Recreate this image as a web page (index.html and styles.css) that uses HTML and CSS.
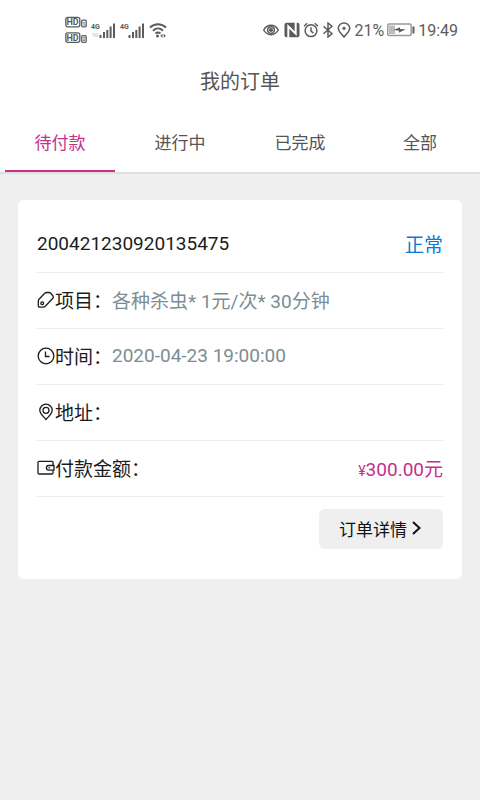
FILE: index.html
```
<!DOCTYPE html>
<html lang="zh-CN">
<head>
  <meta charset="UTF-8">
  <meta name="viewport" content="width=device-width, initial-scale=1.0">
  <title>我的订单</title>
  <link rel="stylesheet" href="styles.css">
</head>
<body>

<div class="status-bar">
  <div class="status-left">
    <svg width="22" height="28" viewBox="0 0 22 28">
      <rect x="0.8" y="1.3" width="14" height="9.5" rx="2"/>
      <text class="hd" x="1.5" y="9.2">HD</text>
      <rect x="16.7" y="4.2" width="4.5" height="6.6" rx="1"/>
      <text class="sim" x="17.5" y="9.7">1</text>
      <rect x="0.8" y="16.8" width="14" height="9.5" rx="2"/>
      <text class="hd" x="1.5" y="24.7">HD</text>
      <rect x="16.7" y="19.7" width="4.5" height="6.6" rx="1"/>
      <text class="sim" x="17.5" y="25.2">2</text>
    </svg>
    <svg width="25" height="18" viewBox="0 0 25 18">
      <text class="net" x="0" y="8">4G</text>
      <text class="net-off" x="1" y="16">1G</text>
      <path class="bars" d="M9.5 17v-3M13 17v-6M16.3 17v-8M19.6 17V5.5M23 17V2.5"/>
    </svg>
    <svg width="25" height="18" viewBox="0 0 25 18">
      <text class="net" x="0" y="8">4G</text>
      <path class="bars" d="M9.5 17v-3M13 17v-6M16.3 17v-8M19.6 17V5.5M23 17V2.5"/>
    </svg>
    <svg width="18" height="18" viewBox="0 0 18 18">
      <path class="wifi" d="M1 6.5C5.5 2 12.5 2 17 6.5M4 9.7c3-2.9 7-2.9 10 0M6.5 12.6c1.5-1.3 3.5-1.3 5 0"/>
      <circle class="fill" cx="8.5" cy="15" r="1.5"/>
      <path class="fill" d="M13.5 12.8v4L11.3 14.8zM14.7 12.8v4l2.2-2z"/>
    </svg>
  </div>
  <div class="status-right">
    <svg width="18" height="16" viewBox="0 0 18 16">
      <path d="M0.7 8C4.3 1.7 11.7 1.7 15.3 8 11.7 14.3 4.3 14.3 0.7 8z"/>
      <circle cx="8" cy="8" r="3.3"/>
      <circle class="fill" cx="8" cy="8" r="2"/>
    </svg>
    <svg width="16" height="16" viewBox="0 0 16 16">
      <rect class="fill" x="0.5" y="0.7" width="15" height="14.6" rx="2"/>
      <path class="nfc" d="M4.3 16V4.3L11.7 11.7V0"/>
    </svg>
    <svg width="16" height="16" viewBox="0 0 16 16">
      <circle cx="8" cy="8.7" r="5.9"/>
      <path d="M8 5.3v3.8l2.5 2M1 4.3 4.2 1.3M15 4.3l-3.2-3"/>
    </svg>
    <svg width="12" height="16" viewBox="0 0 12 16">
      <path d="M1.5 4.3l8.5 7.5L6 15V1l4 3.2-8.5 7.5"/>
    </svg>
    <svg width="14" height="16" viewBox="0 0 14 16">
      <path d="M7 15C4.5 11.5 1.3 9.7 1.3 6.3a5.7 5.3 0 0 1 11.4 0C12.7 9.7 9.5 11.5 7 15z"/>
      <circle class="fill" cx="7" cy="6.3" r="1.6"/>
    </svg>
    <span>21%</span>
    <svg class="battery" width="28" height="14" viewBox="0 0 28 14">
      <rect class="case" x="0.7" y="1" width="23.5" height="11.5" rx="1.5"/>
      <rect class="charge" x="2" y="2.5" width="6" height="8.5"/>
      <path class="fill" d="M6.5 7l6.5-2.7V6l5.5 0.3L12 9.8V7.7z"/>
      <path class="cap" d="M26.5 3.5v7"/>
    </svg>
    <span>19:49</span>
  </div>
</div>

<header>
  <h1>我的订单</h1>
  <nav class="tabs">
    <a class="tab active" href="#">待付款</a>
    <a class="tab" href="#">进行中</a>
    <a class="tab" href="#">已完成</a>
    <a class="tab" href="#">全部</a>
  </nav>
</header>

<main class="order-card">
  <div class="row between">
    <span>200421230920135475</span>
    <span class="state">正常</span>
  </div>
  <div class="row">
    <span class="label">
      <svg class="icon" viewBox="0 0 18 18">
        <path d="M2 8.3 7.5 2.5Q8.5 1.5 10 1.5h2Q13 1.5 13.7 2.2l2.2 2.5Q17 6 15.9 7.2L8.5 15Q7.5 16.2 6 16.2H3Q1.3 16.2 1.3 14.5V10Q1.3 9 2 8.3z"/>
        <circle cx="5.2" cy="12.2" r="1.4"/>
      </svg>
      <span>项目：</span>
    </span>
    <span class="value">各种杀虫* 1元/次* 30分钟</span>
  </div>
  <div class="row">
    <span class="label">
      <svg class="icon" viewBox="0 0 18 18">
        <circle cx="9" cy="9" r="7.8"/>
        <path d="M8.5 4.5v5h4"/>
      </svg>
      <span>时间：</span>
    </span>
    <span class="value">2020-04-23 19:00:00</span>
  </div>
  <div class="row">
    <span class="label">
      <svg class="icon" viewBox="0 0 18 18">
        <path d="M9 16.5C5.5 12.5 2.8 10.5 2.8 7.3a6.2 6.2 0 0 1 12.4 0C15.2 10.5 12.5 12.5 9 16.5z"/>
        <circle cx="9" cy="7.3" r="3"/>
      </svg>
      <span>地址：</span>
    </span>
  </div>
  <div class="row between">
    <span class="label">
      <svg class="icon" viewBox="0 0 18 18">
        <path d="M16 6V3.5Q16 2.3 14.8 2.3H2.2Q1 2.3 1 3.5v10.3Q1 15 2.2 15h12.6Q16 15 16 13.8V11.5"/>
        <path d="M17 6.5h-5.3a2.3 2.3 0 0 0 0 4.6H17zM11.5 8.8h1.5"/>
      </svg>
      <span>付款金额：</span>
    </span>
    <span class="price"><small>¥</small>300.00元</span>
  </div>
  <div class="actions">
    <button type="button" class="detail-btn">
      订单详情
      <svg width="12" height="16" viewBox="0 0 12 16"><path d="M2 2l6.5 6L2 14"/></svg>
    </button>
  </div>
</main>

</body>
</html>
```
FILE: styles.css
```
:root {
  --accent: #c4308c;
  --blue: #0a7bd3;
  --bg: #efefef;
  --text: #1c1c1c;
  --muted: #7b8d93;
  --gray: #555;
}

* {
  box-sizing: border-box;
}

body {
  margin: 0;
  min-height: 100vh;
  font-family: Roboto, "Noto Sans CJK SC", sans-serif;
  color: var(--text);
  background: var(--bg);
}

svg {
  flex: none;
  fill: none;
  stroke: currentColor;
  stroke-width: 1.3;
}

svg .fill {
  fill: currentColor;
  stroke: none;
}

/* status bar */
.status-bar {
  display: flex;
  align-items: center;
  justify-content: space-between;
  height: 60px;
  padding: 0 22px 0 65px;
  font-size: 16px;
  color: #5c5c5c;
  background: #fff;
}

.status-left,
.status-right {
  display: flex;
  align-items: center;
}

.status-left {
  gap: 4px;
}

.status-right {
  gap: 3px;
}

.status-right svg {
  stroke-width: 1.5;
}

.status-bar text {
  fill: currentColor;
  stroke: none;
  font-weight: 700;
}

.status-bar .hd {
  font-size: 9px;
}

.status-bar .sim {
  font-size: 5px;
}

.status-bar .net {
  font-size: 7px;
}

.status-bar .net-off {
  font-size: 5px;
  fill: #ccc;
}

.bars,
.wifi {
  stroke-width: 2;
}

.nfc {
  stroke: #fff;
  stroke-width: 2;
}

.battery .case {
  stroke: #999;
}

.battery .charge {
  fill: #bbb;
  stroke: none;
}

.battery .cap {
  stroke-width: 2;
}

/* title and tabs */
header {
  background: #fff;
  border-bottom: 2px solid #dfdfdf;
}

h1 {
  margin: 0;
  font-size: 20px;
  font-weight: 400;
  line-height: 44px;
  text-align: center;
  color: var(--gray);
}

.tabs {
  display: flex;
  padding-top: 12px;
}

.tab {
  flex: 1;
  margin: 0 5px;
  font-size: 17px;
  line-height: 54px;
  text-align: center;
  text-decoration: none;
  color: var(--gray);
  border-bottom: 2px solid transparent;
}

.tab.active {
  color: var(--accent);
  border-color: var(--accent);
}

/* order card */
.order-card {
  margin: 26px 18px;
  padding: 17px 19px 30px;
  font-size: 19px;
  background: #fff;
  border-radius: 6px;
}

.row {
  display: flex;
  align-items: center;
  height: 56px;
  padding-bottom: 2px;
  border-bottom: 1px solid #ececec;
}

.between {
  justify-content: space-between;
}

.label {
  display: flex;
  align-items: center;
}

.icon {
  width: 18px;
  height: 18px;
}

.value {
  color: var(--muted);
}

.state {
  color: var(--blue);
}

.price {
  color: var(--accent);
}

.price small {
  font-size: 14px;
}

.actions {
  display: flex;
  justify-content: flex-end;
  padding-top: 12px;
}

.detail-btn {
  display: flex;
  align-items: center;
  gap: 4px;
  height: 40px;
  padding: 0 20px 2px;
  font-family: inherit;
  font-size: 17px;
  color: #111;
  background: var(--bg);
  border: none;
  border-radius: 6px;
  cursor: pointer;
}

.detail-btn svg {
  stroke-width: 2;
}
```
